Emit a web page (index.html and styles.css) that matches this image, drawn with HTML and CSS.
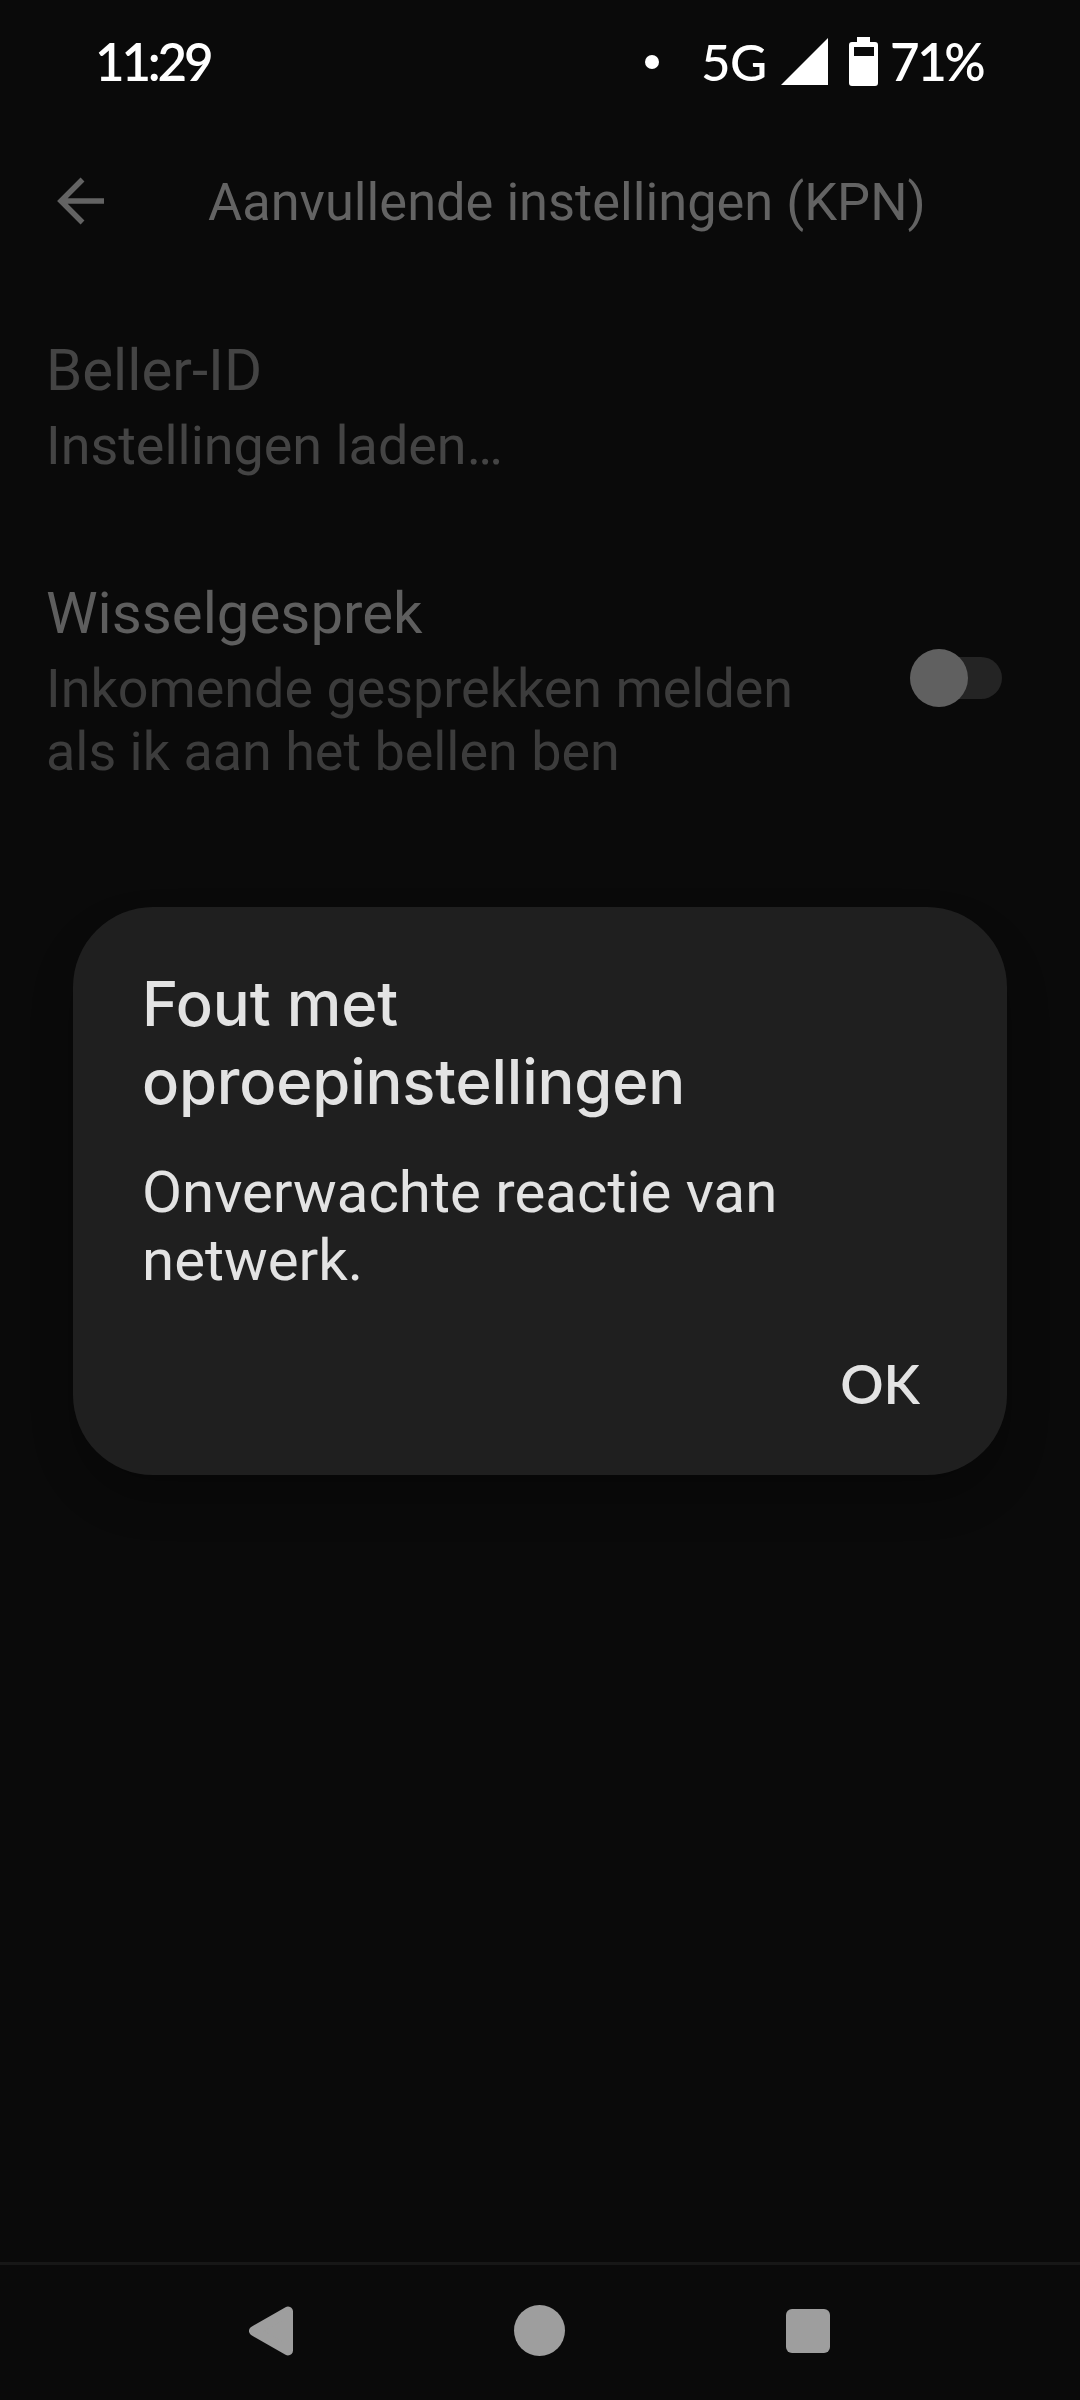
FILE: index.html
```
<!DOCTYPE html>
<html lang="nl">
<head>
<meta charset="UTF-8">
<title>Aanvullende instellingen (KPN)</title>
<link rel="stylesheet" href="styles.css">
</head>

<body>
<div class="screen">
  <div class="status">
    <span class="clock">11:29</span>
    <span class="dot"></span>
    <span class="network">5G</span>
    <svg class="signal" width="47" height="47" viewBox="0 0 47 47"><path d="M47 0V47H0z"/></svg>
    <svg class="battery" width="29" height="49" viewBox="0 0 29 49"><path fill-rule="evenodd" d="M8 0h13v5h5a3 3 0 0 1 3 3v38a3 3 0 0 1-3 3H3a3 3 0 0 1-3-3V8a3 3 0 0 1 3-3h5zM5 10v9h20v-9z"/></svg>
    <span class="percent">71%</span>
  </div>

  <div class="header">
    <svg class="back" width="48" height="48" viewBox="0 0 48 48"><path d="M47 24H5M25.500 2.500L4 24l21.500 21.500"/></svg>
    <h1 class="heading">Aanvullende instellingen (KPN)</h1>
  </div>

  <div class="list">
    <div class="item off">
      <div class="text">
        <div class="name">Beller-ID</div>
        <div class="summary">Instellingen laden…</div>
      </div>
    </div>
    <div class="item">
      <div class="text">
        <div class="name">Wisselgesprek</div>
        <div class="summary">Inkomende gesprekken melden<br>als ik aan het bellen ben</div>
      </div>
      <div class="switch"><span class="thumb"></span></div>
    </div>
  </div>

  <div class="nav">
    <svg class="nav-back" width="44" height="50" viewBox="0 0 44 50"><path d="M5 25L39 5.500v39z"/></svg>
    <span class="nav-home"></span>
    <span class="nav-recent"></span>
  </div>

  <div class="dialog">
    <h2 class="title">Fout met<br>oproepinstellingen</h2>
    <p class="message">Onverwachte reactie van<br>netwerk.</p>
    <div class="actions"><button class="ok">OK</button></div>
  </div>
</div>
</body>
</html>
```
FILE: styles.css
```
body {
	margin: 0;
	background-color: #0a0a0a;
	font-family: Roboto, sans-serif;
}
.screen {
	position: relative;
	display: flex;
	flex-direction: column;
	width: 1080px;
	height: 2400px;
	overflow: hidden;
	white-space: nowrap;
}
/* status bar */
.status {
	display: flex;
	align-items: center;
	box-sizing: border-box;
	height: 123px;
	padding-left: 95px;
	color: #fff;
	fill: #fff;
	font: 600 51px/60px Lato, sans-serif;
}
.clock {
	width: 550px;
	letter-spacing: -3.2px;
}
.dot {
	width: 14px;
	height: 14px;
	border-radius: 50%;
	background-color: #fff;
}
.network {
	width: 78px;
	margin-left: 42px;
	font-weight: 500;
	letter-spacing: -0.5px;
}
.signal {
	margin-left: 2px;
}
.battery {
	margin-left: 21px;
}
.percent {
	margin-left: 12px;
	letter-spacing: -2.4px;
}
/* header */
.header {
	display: flex;
	align-items: center;
	height: 156px;
	padding-left: 57px;
}
.back {
	fill: none;
	stroke: #636363;
	stroke-width: 5.5;
}
.heading {
	margin: 1px 0 0 103px;
	color: #636363;
	font-size: 52.4px;
	font-weight: 400;
	line-height: 62px;
}
/* settings */
.list {
	flex: 1;
	padding: 55px 78px 0 46px;
}
.item {
	display: flex;
	align-items: center;
	justify-content: space-between;
	margin-bottom: 100px;
}
.name {
	color: #5e5e5e;
	font-size: 58.2px;
	line-height: 72px;
}
.summary {
	margin-top: 8px;
	color: #3c3c3c;
	font-size: 53.9px;
	line-height: 63px;
}
.off .name,
.off .summary {
	color: #444;
}
.switch {
	display: flex;
	align-items: center;
	width: 92px;
	height: 42px;
	margin-bottom: 5px;
	border-radius: 21px;
	background-color: #242424;
}
.thumb {
	width: 58px;
	height: 58px;
	border-radius: 50%;
	background-color: #606060;
}
/* navigation bar */
.nav {
	display: flex;
	align-items: center;
	box-sizing: border-box;
	height: 138px;
	padding: 0 250px 4px 249px;
	border-top: 3px solid #171717;
	justify-content: space-between;
}
.nav-back {
	fill: #9e9e9e;
	stroke: #9e9e9e;
	stroke-width: 10;
	stroke-linejoin: round;
}
.nav-home {
	width: 51px;
	height: 51px;
	border-radius: 50%;
	background-color: #9e9e9e;
}
.nav-recent {
	width: 44px;
	height: 44px;
	border-radius: 6px;
	background-color: #9e9e9e;
}
/* dialog */
.dialog {
	position: absolute;
	left: 73px;
	top: 907px;
	box-sizing: border-box;
	width: 934px;
	height: 568px;
	padding: 58px 69px 0;
	border-radius: 80px;
	background-color: #1f1f1f;
	box-shadow: 0 24px 40px rgba(0, 0, 0, 0.25);
	color: #e3e3e3;
}
.title {
	margin: 0;
	font: 500 61.5px/78px Inter, sans-serif;
	letter-spacing: -0.15px;
}
.message {
	margin: 37px 0 0;
	font-size: 58.2px;
	line-height: 68px;
}
.actions {
	display: flex;
	justify-content: flex-end;
	margin-top: 57px;
	padding-right: 18px;
}
.ok {
	padding: 0;
	border: 0;
	background: none;
	color: inherit;
	font: 600 54px/66px Lato, sans-serif;
}
```
